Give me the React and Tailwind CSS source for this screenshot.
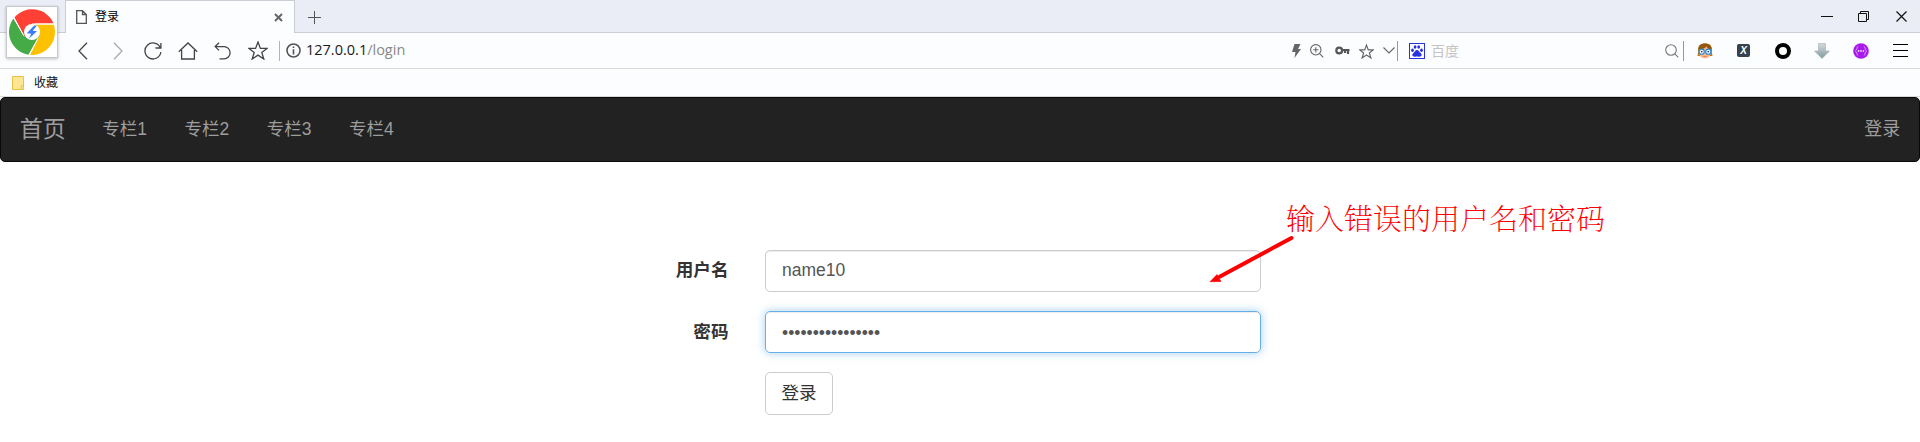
import React from "react";

const ui = "font-['Noto_Sans','Noto_Sans_CJK_SC',sans-serif]";
const page = "font-['Liberation_Sans','Noto_Sans_CJK_SC',sans-serif]";

function Svg({ w, h, children, className = "", sw = 1.3 }) {
  return (
    <svg width={w} height={h} viewBox={`0 0 ${w} ${h}`} fill="none" stroke="currentColor" strokeWidth={sw} className={`shrink-0 ${className}`}>
      {children}
    </svg>
  );
}

function Slot({ children, className = "w-[35px]" }) {
  return <div className={`flex shrink-0 items-center justify-center ${className}`}>{children}</div>;
}

function BrowserLogo() {
  return (
    <div className="absolute left-[6px] top-[6px] flex h-[52px] w-[52px] items-center justify-center border border-[#c8c8cc] bg-white shadow-[0_1px_3px_rgba(0,0,0,0.25)]">
      <svg width="48" height="48" viewBox="-24 -24 48 48">
        <path d="M0 0 L-7.5 4.5 L-17.5 -14.5 A23 23 0 0 1 21.5 -8.5 H0 Z" fill="#ff4035" />
        <path d="M0 0 V-7.5 H21.7 A23 23 0 0 1 -2 22.9 L7 4 Z" fill="#fdc100" />
        <path d="M0 0 L7 4 L-3.6 22.7 A23 23 0 0 1 -18.6 -13.5 L-8 4.5 Z" fill="#45ab47" />
        <path d="M-18.7 -15 L-8.5 3 M22.5 -8 H3 M-3 23.6 L6 6.5" stroke="#fff" strokeWidth="1" />
        <circle r="8" fill="#fff" />
        <path d="M2.2 -6.5 L-5.2 1.2 L-0.8 1.8 L-3 6.5 L5 -0.8 L0.8 -1.3 L4.8 -6.5 Z" fill="#3a7cf5" />
      </svg>
    </div>
  );
}

function TitleBar() {
  return (
    <div className="flex h-[33px] bg-[#eaedf5]">
      <div className="w-[65px] border-b border-[#cccdd4]" />
      <div className="flex w-[230px] items-center border-x border-t border-[#cccdd4] bg-[#fcfdff] pl-[10px] pr-[11px]">
        <Svg w={11} h={14} className="text-[#555]">
          <path d="M.7 .7H6.5L10.3 4.5V13.3H.7ZM6.5 .7V4.5H10.3" />
        </Svg>
        <span className="ml-[8px] flex-1 text-[12px] leading-none text-black">登录</span>
        <Svg w={9} h={9} sw={2} className="text-[#666]">
          <path d="M1 1L8 8M8 1L1 8" />
        </Svg>
      </div>
      <div className="flex flex-1 items-center justify-between border-b border-[#cccdd4] pl-[13px]">
        <Svg w={13} h={13} sw={1} className="mt-[3px] text-[#555]">
          <path d="M6.5 0V13M0 6.5H13" />
        </Svg>
        <div className="flex text-[#111]">
          <Slot className="w-[37px]"><Svg w={12} h={12} sw={1}><path d="M0 6.5H12" /></Svg></Slot>
          <Slot className="w-[37px]"><Svg w={11} h={11} sw={1}><path d="M.5 2.5H8.5V10.5H.5ZM2.5 2.5V.5H10.5V8.5H8.5" /></Svg></Slot>
          <Slot className="w-[38px]"><Svg w={11} h={11} sw={1.2}><path d="M.5 .5L10.5 10.5M10.5 .5L.5 10.5" /></Svg></Slot>
        </div>
      </div>
    </div>
  );
}

const STAR = "M10 1L12.4 7.4H19L13.8 11.5L15.8 18L10 14.1L4.2 18L6.2 11.5L1 7.4H7.6Z";

function Toolbar() {
  return (
    <div className="flex h-[36px] items-center border-b border-[#d9dade] bg-[#fcfdff] pl-[65px] text-[#444]">
      <Slot><Svg w={10} h={18}><path d="M9 .8L1 9L9 17.2" /></Svg></Slot>
      <Slot><Svg w={10} h={18} className="text-[#aaa]"><path d="M1 .8L9 9L1 17.2" /></Svg></Slot>
      <Slot>
        <Svg w={18} h={18}><path d="M16.2 5.5A8 8 0 1 0 16.9 10M16.9 1V6H11.5" /></Svg>
      </Slot>
      <Slot>
        <Svg w={20} h={18}><path d="M.8 9.8L10 1L19.2 9.8M3.6 8V17H16.4V8" /></Svg>
      </Slot>
      <Slot>
        <Svg w={17} h={18}><path d="M5 .8L1.2 4.6L5 8.4M1.2 4.6H10A6 6 0 0 1 10 16.8H5.5" /></Svg>
      </Slot>
      <Slot><Svg w={20} h={19}><path d={STAR} /></Svg></Slot>
      <div className="ml-[4px] h-[20px] w-px bg-[#b4b4b8]" />
      <Svg w={15} h={15} sw={1.6} className="ml-[6px] text-[#555]">
        <circle cx="7.5" cy="7.5" r="6.5" />
        <path d="M7.5 6.3V11.5M7.5 3.4V5" />
      </Svg>
      <div className="ml-[5px] font-['Open_Sans',sans-serif] text-[14.5px] leading-none text-[#1a1a1a]">
        127.0.0.1<span className="text-[#888]">/login</span>
      </div>
      <div className="flex-1" />
      <div className="flex h-full w-[106px] items-center justify-between text-[#666]">
        <Svg w={9} h={14} sw={0}><path fill="currentColor" d="M2.5 0H8.5L6 5H9L2.5 14L3.5 8H0Z" /></Svg>
        <Svg w={14} h={14} sw={1.1} className="ml-[2px]">
          <path d="M9.6 9.6L13.3 13.3M5.8 3.2V8.4M3.2 5.8H8.4" /><circle cx="5.8" cy="5.8" r="5.2" />
        </Svg>
        <Svg w={15} h={9} sw={2.2} className="ml-[3px] text-[#555]">
          <circle cx="4.2" cy="4.5" r="2.9" /><path d="M7 4H14.5M13 4V8M10 4V7" />
        </Svg>
        <svg width="15" height="15" viewBox="0 0 20 19" fill="none" stroke="currentColor" strokeWidth="1.6" className="ml-[2px] mt-px"><path d={STAR} /></svg>
        <Svg w={12} h={7} sw={1.1} className="ml-px mr-[-5px]"><path d="M.5 .5L6 6L11.5 .5" /></Svg>
        <div className="h-[20px] w-px bg-[#999]" />
      </div>
      <div className="ml-[5px] flex w-[281px] items-center pl-[6px]">
        <svg width="16" height="16" viewBox="0 0 16 16" className="shrink-0">
          <rect x=".5" y=".5" width="15" height="15" fill="#fff" stroke="#2932e1" />
          <g fill="#2932e1">
            <ellipse cx="3.5" cy="7.3" rx="1.4" ry="1.8" /><ellipse cx="6.1" cy="4" rx="1.4" ry="1.8" />
            <ellipse cx="9.7" cy="4" rx="1.4" ry="1.8" /><ellipse cx="12.5" cy="7.3" rx="1.4" ry="1.8" />
            <path d="M8 7C9.8 7 10.2 9 11.6 10.1C13.8 12 12.2 14.3 9.8 13.7C8.5 13.4 7.5 13.4 6.2 13.7C3.8 14.3 2.2 12 4.4 10.1C5.8 9 6.2 7 8 7Z" />
          </g>
        </svg>
        <span className="ml-[6px] flex-1 text-[14px] leading-none text-[#c4c4c6]">百度</span>
        <Svg w={14} h={14} sw={1.1} className="mr-[4px] text-[#777]">
          <circle cx="6" cy="6" r="5.3" /><path d="M9.8 9.8L13.3 13.3" />
        </Svg>
        <div className="h-[20px] w-px bg-[#999]" />
      </div>
      <div className="ml-px mr-px flex">
        <Slot className="w-[39px]">
          <svg width="16" height="16" viewBox="0 0 16 16">
            <path d="M1.2 9C0 3 3.5 .5 8 .5C12.5 .5 16 3 14.8 9L15.5 13H.5Z" fill="#b87a1c" />
            <path d="M1.6 6.5C1 2.5 4 .5 8 .5C12 .5 15 2.5 14.4 6.5Z" fill="#93590f" />
            <path d="M2.5 7C5 6.5 8 5.5 9.5 3.5C10.5 5.5 12 6.5 13.5 7V11C13 16.8 3 16.8 2.5 11Z" fill="#fab487" />
            <circle cx="4.7" cy="8.7" r="2.6" fill="#eef7fd" stroke="#2a86d4" strokeWidth="1.1" />
            <circle cx="11.3" cy="8.7" r="2.6" fill="#eef7fd" stroke="#2a86d4" strokeWidth="1.1" />
            <path d="M4 8.6H5.4M10.6 8.6H12" stroke="#225" strokeWidth="1.2" />
            <path d="M6.5 13.5H9.5" stroke="#d98560" />
          </svg>
        </Slot>
        <Slot className="w-[39px]">
          <div className="flex h-[13px] w-[13px] items-center justify-center rounded-[2px] bg-[#34434f] font-['Liberation_Sans',sans-serif] text-[10px] font-bold italic leading-none text-white">X</div>
        </Slot>
        <Slot className="w-[39px]"><div className="h-[16px] w-[16px] rounded-full border-[4.5px] border-black" /></Slot>
        <Slot className="w-[39px]">
          <svg width="16" height="16" viewBox="0 0 16 16">
            <defs><linearGradient id="down" x1="0" y1="0" x2="0" y2="1"><stop stopColor="#d5dadc" /><stop offset="1" stopColor="#7e9b9f" /></linearGradient></defs>
            <path d="M4.5 .5H11.5V8H15.5L8 15.5L.5 8H4.5Z" fill="url(#down)" stroke="#a5b0b3" strokeWidth=".6" />
          </svg>
        </Slot>
        <Slot className="w-[39px]">
          <svg width="16" height="16" viewBox="0 0 16 16">
            <circle cx="8" cy="8" r="7.8" fill="#a81aec" />
            <path d="M5.2 3.5C3.3 3.5 4.6 7.4 2.3 8C4.6 8.6 3.3 12.5 5.2 12.5M10.8 3.5C12.7 3.5 11.4 7.4 13.7 8C11.4 8.6 12.7 12.5 10.8 12.5" fill="none" stroke="#dfa0ff" strokeWidth=".9" />
            <path d="M4.9 8H6.3M7.3 8H8.7M9.7 8H11.1" stroke="#fff" strokeWidth="1.5" />
          </svg>
        </Slot>
        <Slot className="w-[39px] pl-px">
          <Svg w={15} h={14} sw={1} className="text-black"><path d="M0 .5H15M0 6.5H15M0 12.5H15" /></Svg>
        </Slot>
      </div>
    </div>
  );
}

function Bookmarks() {
  return (
    <div className="flex h-[28px] items-center border-b border-[#d9dade] bg-[#fcfdff] pl-[12px]">
      <svg width="12" height="14" viewBox="0 0 12 14">
        <path d="M.5 .5H11.5V13.5H.5Z" fill="#ffe694" stroke="#e9c244" />
        <path d="M9.3 13.5V9.5H11.5" fill="none" stroke="#e9c244" />
      </svg>
      <span className="ml-[10px] text-[12px] leading-none text-[#111]">收藏</span>
    </div>
  );
}

function Navbar() {
  return (
    <nav className={`flex h-[65px] items-center rounded-[5px] border border-[#080808] bg-[#222] pl-[18.75px] pr-[18.75px] text-[17.5px] leading-[25px] text-[#9d9d9d] ${page}`}>
      <a className="mr-[36.5px] text-[23px]">首页</a>
      <div className="flex flex-1 gap-[37.5px]">
        <a>专栏1</a>
        <a>专栏2</a>
        <a>专栏3</a>
        <a>专栏4</a>
      </div>
      <a className="text-[18px]">登录</a>
    </nav>
  );
}

function Field({ label, type, value, active }) {
  return (
    <div className="flex h-[42px] gap-[36.5px]">
      <label className={`w-[728.5px] text-right text-[17.6px] font-bold leading-[25px] text-[#333] ${active ? "pt-[9px]" : "pt-[8px]"}`}>{label}</label>
      <input
        type={type}
        defaultValue={value}
        className={`h-[42px] w-[496px] rounded-[5px] border px-[16px] text-[#555] outline-none ${
          active
            ? "border-[#66afe9] pt-[2px] shadow-[inset_0_1px_1px_rgba(0,0,0,0.075),0_0_10px_rgba(102,175,233,0.6)]"
            : "border-[#ccc] pb-[2px] shadow-[inset_0_1px_1px_rgba(0,0,0,0.075)]"
        }`}
      />
    </div>
  );
}

function Annotation() {
  return (
    <div className="absolute left-[1200px] top-[196px] h-[90px] w-[420px]">
      <span className="absolute left-[86px] top-[7px] whitespace-nowrap font-['Noto_Serif_CJK_SC','Noto_Sans_CJK_SC',serif] text-[29px] font-extralight leading-[29px] text-[#ff0000]">
        输入错误的用户名和密码
      </span>
      <svg width="100" height="90" viewBox="0 0 100 90" className="absolute left-0 top-0">
        <path d="M91.5 42L20 80.5" stroke="#f00" strokeWidth="4" strokeLinecap="round" />
        <path d="M10 85.7L17 78.5L21 85.5Z" fill="#f00" stroke="#f00" strokeWidth=".6" />
      </svg>
    </div>
  );
}

export default function App() {
  return (
    <div className={`relative h-[442px] w-[1920px] overflow-hidden bg-white ${ui}`}>
      <TitleBar />
      <Toolbar />
      <Bookmarks />
      <Navbar />
      <form className={`mt-[88px] flex flex-col gap-[19px] text-[17.5px] ${page}`}>
        <Field label="用户名" type="text" value="name10" />
        <Field label="密码" type="password" value="abcdefgh12345678" active />
        <button type="button" className="ml-[765px] h-[43px] w-[68px] rounded-[5px] border border-[#ccc] bg-white text-[#333]">
          登录
        </button>
      </form>
      <BrowserLogo />
      <Annotation />
    </div>
  );
}
